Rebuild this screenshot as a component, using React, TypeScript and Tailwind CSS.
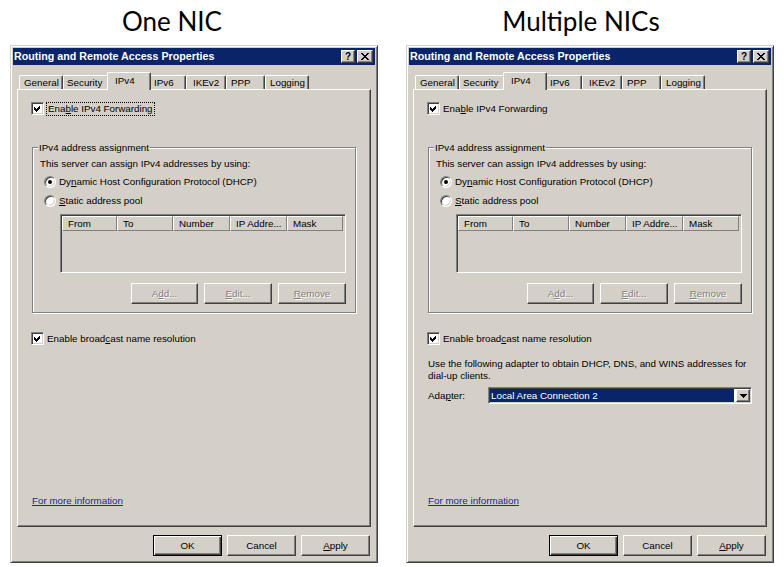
import type { ReactNode } from 'react';

const raised =
  'border border-t-white border-l-white border-r-[#404040] border-b-[#404040] shadow-[inset_-1px_-1px_#808080]';
const sunken =
  'border border-t-[#808080] border-l-[#808080] border-r-white border-b-white shadow-[inset_1px_1px_#404040,inset_-1px_-1px_#d4d0c8]';
const disabledText = 'text-[#808080] [text-shadow:1px_1px_0_#ffffff]';

const tabs = [
  { label: 'General', w: 'w-[44px]', pl: 'pl-[4px]' },
  { label: 'Security', w: 'w-[46px]', pl: 'pl-[3px]' },
  { label: 'IPv4', w: 'w-[44px]', pl: 'pl-[7px]', active: true },
  { label: 'IPv6', w: 'w-[37px]', pl: 'pl-[4px]' },
  { label: 'IKEv2', w: 'w-[40px]', pl: 'pl-[6px]' },
  { label: 'PPP', w: 'w-[39px]', pl: 'pl-[4px]' },
  { label: 'Logging', w: 'w-[44px]', pl: 'pl-[4px]' },
];

const columns = [
  { label: 'From', w: 'w-[55px]' },
  { label: 'To', w: 'w-[56px]' },
  { label: 'Number', w: 'w-[57px]' },
  { label: 'IP Addre...', w: 'w-[57px]' },
  { label: 'Mask', w: 'w-[56px]' },
];

function CheckBox({ children, focus }: { children: ReactNode; focus?: boolean }) {
  return (
    <div className="flex items-center h-[13px] gap-[3px]">
      <div className={`${sunken} w-[13px] h-[13px] bg-white flex items-center justify-center`}>
        <svg width="11" height="11" viewBox="0 0 11 11" shapeRendering="crispEdges">
          <path d="M2 4 L4 6 L8 2 L8 5 L4 9 L2 7 Z" fill="#000" />
        </svg>
      </div>
      <span
        className={
          focus
            ? 'border border-dotted border-black px-[1px] leading-[12px] -ml-[1px]'
            : 'leading-[13px]'
        }
      >
        {children}
      </span>
    </div>
  );
}

function Radio({ children, checked }: { children: ReactNode; checked?: boolean }) {
  return (
    <div className="flex items-center h-[13px] gap-[3px]">
      <div className="w-[12px] h-[12px] rounded-full bg-white flex items-center justify-center border border-t-[#808080] border-l-[#808080] border-r-white border-b-white shadow-[inset_1px_1px_#404040,inset_-1px_-1px_#d4d0c8]">
        {checked && <div className="w-[4px] h-[4px] rounded-full bg-black" />}
      </div>
      <span className="leading-[13px]">{children}</span>
    </div>
  );
}

function Button({
  children,
  w,
  disabled,
  isDefault,
}: {
  children: ReactNode;
  w: string;
  disabled?: boolean;
  isDefault?: boolean;
}) {
  const frame = isDefault
    ? 'border border-black shadow-[inset_1px_1px_white,inset_-1px_-1px_#404040,inset_-2px_-2px_#808080]'
    : raised;
  return (
    <div
      className={`${w} h-[21px] ${frame} bg-[#d4d0c8] flex items-center justify-center leading-[13px] ${
        disabled ? disabledText : ''
      }`}
    >
      {children}
    </div>
  );
}

function TitleBar() {
  return (
    <div className="h-[17px] bg-[#0a246a] flex items-center pl-[1px] pr-[2px] gap-[2px]">
      <span className="flex-1 text-white font-bold text-[10.7px] leading-[13px] whitespace-nowrap">
        Routing and Remote Access Properties
      </span>
      <div
        className={`${raised} w-[14px] h-[13px] bg-[#d4d0c8] flex items-center justify-center font-bold text-[10px] leading-[10px] text-black`}
      >
        ?
      </div>
      <div className={`${raised} w-[16px] h-[13px] bg-[#d4d0c8] flex items-center justify-center`}>
        <svg width="8" height="7" viewBox="0 0 8 7" shapeRendering="crispEdges">
          <path
            d="M0 0h2v1h1v1h2V1h1V0h2v1H7v1H6v1H5v1h1v1h1v1h1v1H6V6H5V5H3v1H2v1H0V6h1V5h1V4h1V3H2V2H1V1H0z"
            fill="#000"
          />
        </svg>
      </div>
    </div>
  );
}

function Tabs() {
  return (
    <div className="flex items-end h-[17px] pl-[2px]">
      {tabs.map((t) =>
        t.active ? (
          <div
            key={t.label}
            className={`relative z-10 ${t.w} -mx-[2px] -mb-[1px] h-[18px] bg-[#d4d0c8] border-t border-l border-r border-t-white border-l-white border-r-[#404040] shadow-[inset_-1px_0_#808080] rounded-t-[2px] pt-[2px] ${t.pl} leading-[12px]`}
          >
            {t.label}
          </div>
        ) : (
          <div
            key={t.label}
            className={`${t.w} h-[14px] border-t border-l border-r border-t-white border-l-white border-r-[#404040] shadow-[inset_-1px_0_#808080] rounded-t-[2px] flex items-center ${t.pl} leading-[12px]`}
          >
            {t.label}
          </div>
        )
      )}
    </div>
  );
}

function ListView() {
  return (
    <div className={`${sunken} ml-[20px] w-[286px] h-[59px] bg-[#d4d0c8] p-[1px]`}>
      <div className="flex h-[15px]">
        {columns.map((c) => (
          <div
            key={c.label}
            className={`${c.w} border border-t-white border-l-white border-r-[#808080] border-b-[#808080] pl-[5px] leading-[13px] whitespace-nowrap overflow-hidden`}
          >
            {c.label}
          </div>
        ))}
      </div>
    </div>
  );
}

function Dialog({ multi }: { multi?: boolean }) {
  return (
    <div className="h-[518px] bg-[#d4d0c8] border border-t-[#d4d0c8] border-l-[#d4d0c8] border-r-[#404040] border-b-[#404040] shadow-[inset_1px_1px_white,inset_-1px_-1px_#808080] p-[2px] flex flex-col">
      <TitleBar />
      <div className="flex-1 flex flex-col px-[4px] pt-[7px] pb-[4px]">
        <Tabs />
        <div className={`flex-1 flex flex-col bg-[#d4d0c8] ${raised} pl-[13px]`}>
          <div className="mt-[12px]">
            <CheckBox focus={!multi}>
              Ena<u>b</u>le IPv4 Forwarding
            </CheckBox>
          </div>

          <fieldset className="mt-[26px] ml-[1px] w-[324px] border border-[#808080] shadow-[inset_1px_1px_white,1px_1px_white]">
            <legend className="ml-[5px] px-[1px] bg-[#d4d0c8] leading-[13px]">IPv4 address assignment</legend>
            <div className="pl-[7px] pr-[9px] pb-[8px] flex flex-col">
              <div className="mt-[3px] leading-[13px]">This server can assign IPv4 addresses by using:</div>
              <div className="mt-[5px] ml-[4px]">
                <Radio checked>
                  Dy<u>n</u>amic Host Configuration Protocol (DHCP)
                </Radio>
              </div>
              <div className="mt-[6px] ml-[4px]">
                <Radio>
                  <u>S</u>tatic address pool
                </Radio>
              </div>
              <div className="mt-[7px]">
                <ListView />
              </div>
              <div className="mt-[10px] flex justify-end gap-[6px]">
                <Button w="w-[67px]" disabled>
                  A<u>d</u>d...
                </Button>
                <Button w="w-[68px]" disabled>
                  <u>E</u>dit...
                </Button>
                <Button w="w-[68px]" disabled>
                  <u>R</u>emove
                </Button>
              </div>
            </div>
          </fieldset>

          <div className="mt-[19px]">
            <CheckBox>
              Enable broad<u>c</u>ast name resolution
            </CheckBox>
          </div>

          {multi && (
            <>
              <div className="mt-[13px] ml-[1px] leading-[12px]">
                Use the following adapter to obtain DHCP, DNS, and WINS addresses for
                <br />
                dial-up clients.
              </div>
              <div className="mt-[5px] ml-[1px] flex items-center">
                <span className="w-[60px] leading-[13px]">
                  Ada<u>p</u>ter:
                </span>
                <div className={`${sunken} w-[264px] h-[17px] bg-white flex p-[1px] gap-[2px]`}>
                  <div className="flex-1 bg-[#0a246a] text-white leading-[13px] pl-[1px]">
                    Local Area Connection 2
                  </div>
                  <div className={`${raised} w-[14px] bg-[#d4d0c8] flex items-center justify-center`}>
                    <svg width="7" height="4" viewBox="0 0 7 4" shapeRendering="crispEdges">
                      <path d="M0 0h7v1H6v1H5v1H4v1H3V3H2V2H1V1H0z" fill="#000" />
                    </svg>
                  </div>
                </div>
              </div>
            </>
          )}

          <a className="mt-auto mb-[19px] ml-[1px] leading-[13px] text-[#2323a8] underline w-fit">
            For more information
          </a>
        </div>

        <div className="mt-[8px] flex justify-end gap-[5px] pr-[1px]">
          <Button w="w-[69px]" isDefault>
            OK
          </Button>
          <Button w="w-[69px]">Cancel</Button>
          <Button w="w-[69px]">
            <u>A</u>pply
          </Button>
        </div>
      </div>
    </div>
  );
}

export default function App() {
  return (
    <div className="w-[784px] h-[567px] bg-white flex pl-[10px] gap-[28px] text-[9.8px] text-black font-['Liberation_Sans',Arial,sans-serif] overflow-hidden">
      <div className="w-[368px] flex flex-col">
        <div className="h-[45px] pt-[8px] pr-[44px] text-center font-['Lato',sans-serif] text-[26px] leading-none">
          One NIC
        </div>
        <Dialog />
      </div>
      <div className="w-[368px] flex flex-col">
        <div className="h-[45px] pt-[8px] pr-[18px] text-center font-['Lato',sans-serif] text-[26px] leading-none">
          Multiple NICs
        </div>
        <Dialog multi />
      </div>
    </div>
  );
}
